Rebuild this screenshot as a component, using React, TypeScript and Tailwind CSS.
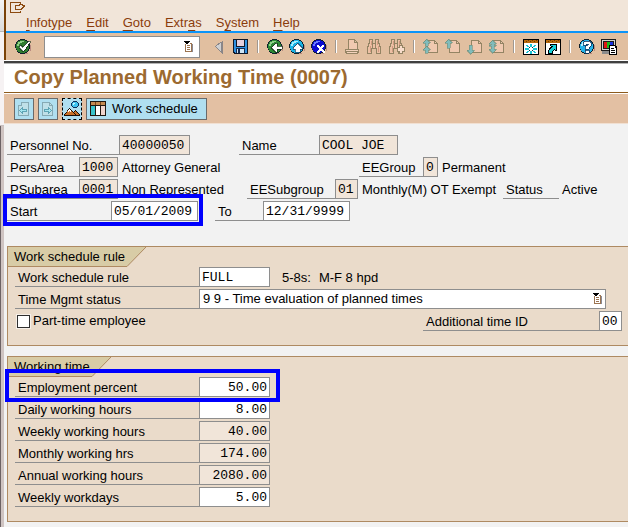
import type { ReactNode } from 'react';

const SANS = "font-['Liberation_Sans',Arial,sans-serif]";
const MONO = "font-['Liberation_Mono','Courier_New',monospace]";

function Icon({ children, className = 'size-4' }: { children: ReactNode; className?: string }) {
  return (
    <svg viewBox="0 0 16 16" className={`block shrink-0 ${className}`} shapeRendering="crispEdges" fill="none" aria-hidden="true">
      {children}
    </svg>
  );
}

/* ---------- Icons ---------- */

function Ball({ color, light }: { color: string; light: string }) {
  return (
    <>
      <path d="M6 15h7v-1h2v-2h1V6h-1v8H6z" fill="#b98a80" />
      <path d="M5 0h5v1h2v1h1v1h1v2h1v5h-1v2h-1v1h-1v1h-2v1H5v-1H3v-1H2v-2H1v-2H0V5h1V3h1V2h1V1h2z" fill="#10202c" />
      <path d="M5 1h5v1h2v1h1v2h1v5h-1v2h-1v1h-2v1H5v-1H3v-1H2v-2H1V5h1V3h1V2h2z" fill={color} />
      <path d="M5 2h4v1H7v1H5v1H4v2H2V5h1V3h2z" fill={light} />
    </>
  );
}

const CheckIcon = () => (
  <Icon>
    <Ball color="#2f7d2f" light="#8fcf86" />
    <path d="M13 2h2v2h-1v1h-1v2h-1v1h-1v2h-1v1H9v1H7v-1H6v-1H5V9H4V7h1V6h1v1h1v1h1V7h1V6h1V5h1V4h1V3h1z" fill="#fff" stroke="#0c2a10" strokeWidth="0.6" />
  </Icon>
);
const BackIcon = () => (
  <Icon>
    <Ball color="#2b8a34" light="#8fd08a" />
    <path d="M4 8h1V7h1V6h1V5h1V4h2v3h5v3h-5v3H8v-1H7v-1H6v-1H5V9H4z" fill="#fff" stroke="#0c2a10" strokeWidth="0.7" />
  </Icon>
);
const ExitIcon = () => (
  <Icon>
    <Ball color="#19b4e6" light="#a5eeff" />
    <path d="M8 4h1v1h1v1h1v1h1v1h1v2h-2v3H6v-3H4V8h1V7h1V6h1V5h1z" fill="#fff" stroke="#123a60" strokeWidth="0.7" />
  </Icon>
);
const CancelIcon = () => (
  <Icon>
    <Ball color="#0c0cd0" light="#6a7cff" />
    <path d="M6 6h2v1h1v1h1V7h1V6h2v2h-1v1h-1v1h1v1h1v1h1v2h-2v-1h-1v-1H9v1H8v1H6v-2h1v-1h1V9H7V8H6z" fill="#fff" />
  </Icon>
);
const TriangleIcon = () => (
  <Icon>
    <path d="M11 2h1v13h-1v-1h-1v-1H9v-1H8v-1H7v-1H6V9H5V8H4V7h1V6h1V5h1V4h2V3h2z" fill="#8a8688" />
    <path d="M10 4v8H9v-1H8v-1H7V9H6V8H5V7h1V6h2V5h1V4z" fill="#cfd0d2" />
  </Icon>
);
const SaveIcon = () => (
  <Icon>
    <path d="M0 0h15v15H1v-1H0z" fill="#101828" />
    <path d="M1 1h2v7h9V1h2v13H2v-1H1z" fill="#2d8fe0" />
    <path d="M4 1h7v6H4z" fill="#e4cfdc" />
    <path d="M3 9h9v5H3z" fill="#142a50" />
    <path d="M4 10h7v4H4z" fill="#cfe6f6" />
    <path d="M5 10h2v4H5z" fill="#142a50" />
  </Icon>
);
const PrintIcon = () => (
  <Icon>
    <path d="M3.5 9.500V.5h6l3 3v6M9.500.5v3h3" stroke="#948464" fill="#f0c9b0" />
    <path d="M.5 10.500h13v3h-1v1h-11v-1h-1z" stroke="#948464" fill="#f3d3bd" />
    <path d="M1 12h12v1H1z" fill="#948464" />
  </Icon>
);
const Binoculars = () => (
  <>
    <path d="M2.500.5h3v4h3v-4h3v4h1v3h1v7h-4v-5h-5v5h-4v-7h1v-3h1z" stroke="#948464" fill="#edc0a4" />
    <path d="M4 2h1v4H4zM10 2h1v4h-1zM3 7h1v6H3zM11 7h1v6h-1z" fill="#cf9a80" />
    <path d="M5 5h1v4H5zM8 5h1v4H8z" fill="#948464" />
  </>
);
const FindIcon = () => (
  <Icon>
    <Binoculars />
  </Icon>
);
const FindNextIcon = () => (
  <Icon>
    <Binoculars />
    <path d="M10 6h4v2h2v5h-2v2h-4v-2H8V8h2z" fill="#948464" />
    <path d="M11 7h2v2h2v3h-2v2h-2v-2H9V9h2z" fill="#f8ddcc" />
  </Icon>
);
const Sheet = () => (
  <>
    <path d="M4.500 1.500h7l3 3v9h-10z" stroke="#948464" fill="#f0c9b0" />
    <path d="M11.500 1.500v3h3" stroke="#948464" />
  </>
);
const UP = 'M3 0h1v1h1v1h1v1h1v1H5v3H2V4H0V3h1V2h1V1h1z';
const FirstPageIcon = () => (
  <Icon>
    <Sheet />
    <path d={UP} fill="#80bcbc" stroke="#6f8f7c" strokeWidth="0.6" />
    <path d={UP} transform="translate(0 7)" fill="#80bcbc" stroke="#6f8f7c" strokeWidth="0.6" />
  </Icon>
);
const PrevPageIcon = () => (
  <Icon>
    <Sheet />
    <path d="M3 0h1v1h1v1h1v1h1v1H5v5H2V4H0V3h1V2h1V1h1z" fill="#80bcbc" stroke="#6f8f7c" strokeWidth="0.6" />
  </Icon>
);
const NextPageIcon = () => (
  <Icon>
    <Sheet />
    <path d="M3 15h1v-1h1v-1h1v-1h1v-1H5V6H2v5H0v1h1v1h1v1h1z" fill="#80bcbc" stroke="#6f8f7c" strokeWidth="0.6" />
  </Icon>
);
const LastPageIcon = () => (
  <Icon>
    <Sheet />
    <path d="M3 1h1v1h1v1h1v1h1v1H5v1h2v1H5v3h2v1H6v1H5v1H4v1H3v-1H2v-1H1v-1H0v-1h2V7H0V6h2V5H0V4h1V3h1V2h1z" fill="#80bcbc" stroke="#6f8f7c" strokeWidth="0.6" />
  </Icon>
);
const WindowFrame = () => (
  <>
    <path d="M0 0h16v16H0z" fill="#000" />
    <path d="M1 1h14v3H1z" fill="#b8690c" />
    <path d="M3 2h1v1H3zM5 1h1v1H5zM7 2h1v1H7zM9 1h1v1H9zM11 2h1v1h-1zM13 1h1v1h-1z" fill="#6e3a00" />
    <path d="M1 4h14v11H1z" fill="#fff" />
  </>
);
const NewSessionIcon = () => (
  <Icon>
    <WindowFrame />
    <path d="M7 5h2v3H7zM7 12h2v3H7zM2 9h4v2H2zM10 9h4v2h-4zM3 6h2v1h1v1H4V7H3zM11 6h2v1h-1v1h-2V7h1zM4 12h2v1H5v1H3v-1h1zM10 12h2v1h1v1h-2v-1h-1z" fill="#19c3d6" />
    <path d="M6 8h1v1H6zM9 8h1v1H9zM6 11h1v1H6zM9 11h1v1H9z" fill="#083040" />
  </Icon>
);
const ShortcutIcon = () => (
  <Icon>
    <WindowFrame />
    <path d="M5 5h7v7h-2v-1H9v1H8v3H3v-4h1V9h1V8h1V7H5z" fill="#000" />
    <path d="M6 6h5v5h-1v-1H9v1H8v1H7v2H4v-3h1v-1h1V9h1V8h1V7H6z" fill="#18d0d8" />
  </Icon>
);
const HelpIcon = () => (
  <Icon>
    <Ball color="#25b4ea" light="#b9f2ff" />
    <path d="M4 5V3h1V2h6v1h1v4h-1v1h-1v2H6V7h1V6h2V5H7v1H4zM6 11h4v3H6z" fill="#fff" stroke="#0c3a64" strokeWidth="0.8" />
  </Icon>
);
const LayoutIcon = () => (
  <Icon>
    <path d="M0 0h15v12H0z" fill="#1c1c1c" />
    <path d="M1 1h13v10H1z" fill="#d6d3ce" />
    <path d="M2 2h11v8H2z" fill="#1c1c1c" />
    <path d="M3 3h3v6H3z" fill="#e01414" />
    <path d="M6 3h3v6H6z" fill="#18b818" />
    <path d="M9 3h3v6H9z" fill="#1830e0" />
    <path d="M1 12h9v3H1z" fill="#8c8c8c" />
    <path d="M8 6h6v1h2v9H8z" fill="#000" />
    <path d="M9 7h5v2h1v6H9z" fill="#fff" />
    <path d="M10 9h3v1h-3zM10 11h4v1h-4zM10 13h4v1h-4z" fill="#000" />
  </Icon>
);
const ListIcon = () => (
  <svg viewBox="0 0 9 11" className="block h-[11px] w-[9px]" shapeRendering="crispEdges" aria-hidden="true">
    <path d="M1 2h7v8H1z" fill="#fff" />
    <path d="M1 3h1v7h6v1H1zM6 2h2v9H7V3H6zM3 4h3v1H3zM3 6h3v1H3zM3 8h3v1H3z" fill="#9c7450" />
    <path d="M8 3h1v8H8z" fill="#8a8a94" />
    <path d="M0 0h6v1H5v1H4v1H2V2H1V1H0z" fill="#000" />
  </svg>
);
const PrevRecordIcon = () => (
  <Icon>
    <path d="M5.500 1.500h7v13h-10v-10h3z" stroke="#86aab4" fill="#bfe0e8" />
    <path d="M5.500 1.500v3h-3" stroke="#86aab4" />
    <path d="M3.500 9.500l3-3v2h4v2h-4v2z" stroke="#5ea4b4" fill="#a4e6f0" />
  </Icon>
);
const NextRecordIcon = () => (
  <Icon>
    <path d="M2.500 1.500h7l3 3v10h-10z" stroke="#86aab4" fill="#bfe0e8" />
    <path d="M9.500 1.500v3h3" stroke="#86aab4" />
    <path d="M11.500 9.500l-3-3v2h-4v2h4v2z" stroke="#5ea4b4" fill="#a4e6f0" />
  </Icon>
);
const OverviewIcon = () => (
  <Icon>
    <path d="M9 0h4v1h1v1h1v3h-1v1h-1v1H9V6H8V5H7V2h1V1h1z" fill="#10305a" />
    <path d="M9 1h4v1h1v3h-1v1H9V5H8V2h1z" fill="#3fc4f0" />
    <path d="M9 2h2v1h-1v1H9z" fill="#c8f6ff" />
    <path d="M5 7h1v1h1v1h1v1h1v1h1v-1h1V9h1v1h1v1h1v1h1v1h1v2H0v-2h1v-1h1v-1h1V9h1V8h1z" fill="#1c1008" />
    <path d="M5 8h1v1h1v1h1v1h1v1h1v1h1v1H1v-1h1v-1h1v-2h1V9h1zM11 10h1v1h1v1h1v1h1v1h-3v-1h-1v-1h-1v-1h1z" fill="#c87028" />
    <path d="M5 8h1v1h1v2H6v-1H5v1H4V9h1z" fill="#fff" />
  </Icon>
);
const ScheduleIcon = () => (
  <svg viewBox="0 0 16 15" className="block h-[15px] w-4 shrink-0" shapeRendering="crispEdges" aria-hidden="true">
    <path d="M0 0h16v15H0z" fill="#201810" />
    <path d="M1 1h14v3H1z" fill="#c48a50" />
    <path d="M1 5h4v9H1z" fill="#38c4cc" />
    <path d="M6 5h4v9H6z" fill="#fff" />
    <path d="M11 5h4v9h-4z" fill="#f0d4cc" />
    <path d="M5 1h1v3H5zM10 1h1v3h-1z" fill="#7c4818" />
  </svg>
);
const SystemMenuIcon = () => (
  <svg viewBox="0 0 15 11" className="block h-[11px] w-[15px]" shapeRendering="crispEdges" fill="none" aria-hidden="true">
    <path d="M10.500 2v-1.500h-10v10h10v-2" stroke="#8c4a10" />
    <path d="M5.500 3.500h4v-1h3v1h2v1h-1v1h-1v1h-1v1h-6z" stroke="#8c4a10" />
  </svg>
);

/* ---------- Building blocks ---------- */

function ToolButton({ label, disabled, children }: { label: string; disabled?: boolean; children: ReactNode }) {
  return (
    <button type="button" aria-label={label} title={label} disabled={disabled} className="size-4 shrink-0">
      {children}
    </button>
  );
}

const Separator = () => <span className="mx-0.5 h-[13px] w-0.5 shrink-0 border-l border-[#a09890] bg-white" />;

function FieldLabel({ id, width, children }: { id?: string; width: string; children: ReactNode }) {
  return (
    <label htmlFor={id} className={`h-5 shrink-0 truncate border-b border-[#8e8e8e] pl-[3px] pt-0.5 leading-[17px] ${width}`}>
      {children}
    </label>
  );
}

function Field({ id, value, width, locked, right }: { id: string; value: string; width: string; locked?: boolean; right?: boolean }) {
  return (
    <input
      id={id}
      defaultValue={value}
      readOnly={locked}
      className={`h-5 shrink-0 rounded-none border border-[#8e8e8e] px-0.5 text-[13px] leading-[18px] outline-none ${MONO} ${width} ${locked ? 'bg-[#f1e5d9]' : 'bg-white'} ${right ? 'text-right' : ''}`}
    />
  );
}

const Note = ({ children }: { children: ReactNode }) => <span className="h-5 shrink-0 whitespace-nowrap pt-0.5 leading-[17px]">{children}</span>;

function GroupBox({ title, width, children }: { title: string; width: number; children: ReactNode }) {
  return (
    <section className="border-y border-l border-[#ae8a62] bg-[#eadbca]">
      <h2 className="relative h-5 pl-1.5 leading-5">
        <svg width={width} height="21" viewBox={`0 0 ${width} 21`} className="absolute left-0 top-0" aria-hidden="true">
          <path d={`M0 0H${width}L${width - 19} 19.500H0z`} fill="#d8cca6" />
          <path d={`M${width} 0L${width - 19} 19.500H0`} fill="none" stroke="#ae8a62" />
        </svg>
        <span className="relative">{title}</span>
      </h2>
      {children}
    </section>
  );
}

const MENUS: [string, string, string][] = [
  ['', 'I', 'nfotype'],
  ['', 'E', 'dit'],
  ['', 'G', 'oto'],
  ['Extr', 'a', 's'],
  ['S', 'y', 'stem'],
  ['', 'H', 'elp'],
];

const HOURS = [
  { id: 'daily', label: 'Daily working hours', value: '8.00', locked: false },
  { id: 'weekly', label: 'Weekly working hours', value: '40.00', locked: true },
  { id: 'monthly', label: 'Monthly working hrs', value: '174.00', locked: true },
  { id: 'annual', label: 'Annual working hours', value: '2080.00', locked: true },
  { id: 'workdays', label: 'Weekly workdays', value: '5.00', locked: false },
];

export default function App() {
  return (
    <div className={`flex min-h-screen overflow-hidden bg-[#f2f2f2] text-[13px] text-black ${SANS}`}>
      <div className="flex w-1 shrink-0 flex-col bg-[#cfc4c2]">
        <div className="h-8 border-b border-[#b8b8b8] bg-linear-to-b from-[#f4f4f4] to-[#dcdcdc]" />
        <div className="h-[94px] border-b border-[#c8c0c0] bg-[#f6f2f3]" />
        <div className="flex-1 border-l border-[#6c6264]" />
      </div>

      <div className="min-w-0 flex-1">
        <header className="border-l-2 border-[#7a4208]">
          <div className="h-[31px] bg-[#f1e5d9] pl-1">
            <button type="button" aria-label="System menu" className="block h-[13px] pt-px">
              <SystemMenuIcon />
            </button>
            <nav className="flex gap-3.5 pl-4 leading-5 text-[#8a3c0c]">
              {MENUS.map(([before, key, after]) => (
                <button type="button" key={before + key + after}>
                  {before}
                  <u className="underline-offset-[3px]">{key}</u>
                  {after}
                </button>
              ))}
            </nav>
          </div>
          <div className="flex h-[29px] items-center gap-1.5 border-t-2 border-[#0c94f8] bg-[#e1bfa0] pl-[9px]">
            <ToolButton label="Enter"><CheckIcon /></ToolButton>
            <div className="ml-[7px] mr-[5px] flex h-[22px] w-[156px] shrink-0 items-center border border-[#8e8e8e] bg-white pr-1.5">
              <input aria-label="Command" className="min-w-0 flex-1 px-1 outline-none" />
              <button type="button" aria-label="Command history"><ListIcon /></button>
            </div>
            <ToolButton label="Close command field"><TriangleIcon /></ToolButton>
            <ToolButton label="Save"><SaveIcon /></ToolButton>
            <Separator />
            <ToolButton label="Back"><BackIcon /></ToolButton>
            <ToolButton label="Exit"><ExitIcon /></ToolButton>
            <ToolButton label="Cancel"><CancelIcon /></ToolButton>
            <Separator />
            <ToolButton label="Print" disabled><PrintIcon /></ToolButton>
            <ToolButton label="Find" disabled><FindIcon /></ToolButton>
            <ToolButton label="Find next" disabled><FindNextIcon /></ToolButton>
            <Separator />
            <ToolButton label="First page" disabled><FirstPageIcon /></ToolButton>
            <ToolButton label="Previous page" disabled><PrevPageIcon /></ToolButton>
            <ToolButton label="Next page" disabled><NextPageIcon /></ToolButton>
            <ToolButton label="Last page" disabled><LastPageIcon /></ToolButton>
            <Separator />
            <ToolButton label="New session"><NewSessionIcon /></ToolButton>
            <ToolButton label="Create shortcut"><ShortcutIcon /></ToolButton>
            <Separator />
            <ToolButton label="Help"><HelpIcon /></ToolButton>
            <ToolButton label="Customize layout"><LayoutIcon /></ToolButton>
          </div>
        </header>

        <div className="h-1 border-y border-t-white border-b-[#b4b4b4] bg-[#404040]" />
        <h1 className="h-[29px] whitespace-nowrap border-b border-[#8c5a1c] bg-white pl-2.5 text-xl font-bold leading-[27px] text-[#9c6a30]">
          Copy Planned Working Time (0007)
        </h1>
        <div className="flex h-[31px] items-center gap-1 border-y border-t-white border-b-[#f1e0d2] bg-[#e3c0a3] pl-2.5">
          <button type="button" aria-label="Previous record" disabled className="flex h-[22px] w-5 items-center justify-center border border-[#6a6a6a] bg-[#b0dff0]">
            <PrevRecordIcon />
          </button>
          <button type="button" aria-label="Next record" disabled className="flex h-[22px] w-5 items-center justify-center border border-[#6a6a6a] bg-[#b0dff0]">
            <NextRecordIcon />
          </button>
          <button type="button" aria-label="Overview" className="flex h-[22px] w-5 items-center justify-center border border-dashed border-black bg-[#b0dff0]">
            <OverviewIcon />
          </button>
          <button type="button" className="flex h-[22px] items-center gap-1.5 border border-[#6a6a6a] bg-[#b0dff0] pl-[3px] pr-2">
            <ScheduleIcon />
            <span className="leading-5">Work schedule</span>
          </button>
        </div>

        <main className="pb-1 pl-[3px] pt-[11px]">
          <div className="flex flex-col gap-0.5">
            <div className="flex">
              <FieldLabel id="pernr" width="w-28">Personnel No.</FieldLabel>
              <Field id="pernr" value="40000050" width="w-[71px]" locked />
              <div className="ml-[49px] flex">
                <FieldLabel id="name" width="w-20">Name</FieldLabel>
                <Field id="name" value="COOL JOE" width="w-[79px]" locked />
              </div>
            </div>
            <div className="flex">
              <div className="flex w-[352px] shrink-0">
                <FieldLabel id="area" width="w-[72px]">PersArea</FieldLabel>
                <div className="mr-1 flex"><Field id="area" value="1000" width="w-[39px]" locked /></div>
                <Note>Attorney General</Note>
              </div>
              <FieldLabel id="eegroup" width="w-16">EEGroup</FieldLabel>
              <div className="mr-1 flex"><Field id="eegroup" value="0" width="w-[15px]" locked /></div>
              <Note>Permanent</Note>
            </div>
            <div className="flex">
              <div className="flex w-60 shrink-0">
                <FieldLabel id="subarea" width="w-[72px]">PSubarea</FieldLabel>
                <div className="mr-1 flex"><Field id="subarea" value="0001" width="w-[39px]" locked /></div>
                <Note>Non Represented</Note>
              </div>
              <FieldLabel id="subgroup" width="w-[88px]">EESubgroup</FieldLabel>
              <Field id="subgroup" value="01" width="w-[23px]" locked />
              <div className="ml-1 flex w-[141px] shrink-0"><Note>Monthly(M) OT Exempt</Note></div>
              <span className="mr-[3px] h-5 w-14 shrink-0 border-b border-[#8e8e8e] pl-[3px] pt-0.5 leading-[17px]">Status</span>
              <Note>Active</Note>
            </div>
            <div className="flex">
              <div className="relative flex">
                <FieldLabel id="start" width="w-[104px]">Start</FieldLabel>
                <Field id="start" value="05/01/2009" width="w-[87px]" />
                <div className="pointer-events-none absolute -bottom-[5px] -left-1 -right-[5px] -top-[7px] z-10 border-4 border-[#0000fe]" />
              </div>
              <div className="ml-[17px] flex">
                <FieldLabel id="to" width="w-12">To</FieldLabel>
                <Field id="to" value="12/31/9999" width="w-[87px]" />
              </div>
            </div>
          </div>

          <div className="mt-[25px] flex flex-col gap-2.5">
            <GroupBox title="Work schedule rule" width={138}>
              <div className="flex flex-col gap-0.5 pb-3.5 pl-[7px] pr-1.5">
                <div className="flex">
                  <FieldLabel id="rule" width="w-[184px]">Work schedule rule</FieldLabel>
                  <Field id="rule" value="FULL" width="w-[71px]" />
                  <div className="ml-3 flex gap-2"><Note>5-8s:</Note><Note>M-F 8 hpd</Note></div>
                </div>
                <div className="flex pr-4">
                  <FieldLabel id="mgmt" width="w-[184px]">Time Mgmt status</FieldLabel>
                  <div className="relative min-w-0 flex-1">
                    <select id="mgmt" className="block h-5 w-full appearance-none rounded-none border border-[#8e8e8e] bg-white px-[3px] leading-[18px] outline-none">
                      <option>9 9 - Time evaluation of planned times</option>
                    </select>
                    <span className="pointer-events-none absolute right-1 top-1"><ListIcon /></span>
                  </div>
                </div>
                <div className="flex justify-between">
                  <label className="flex items-center gap-[3px] pl-0.5">
                    <input type="checkbox" className="size-[13px] appearance-none border border-[#303030] bg-white outline-1 outline-[#f6efe8]" />
                    Part-time employee
                  </label>
                  <div className="flex">
                    <FieldLabel id="addid" width="w-44">Additional time ID</FieldLabel>
                    <Field id="addid" value="00" width="w-[23px]" />
                  </div>
                </div>
              </div>
            </GroupBox>

            <GroupBox title="Working time" width={103}>
              <div className="flex flex-col items-start gap-0.5 pb-3.5 pl-[7px]">
                <div className="relative flex">
                  <FieldLabel id="percent" width="w-[184px]">Employment percent</FieldLabel>
                  <Field id="percent" value="50.00" width="w-[71px]" right />
                  <div className="pointer-events-none absolute -bottom-[5px] -left-2.5 -right-2.5 -top-2 z-10 border-4 border-[#0000fe]" />
                </div>
                {HOURS.map((h) => (
                  <div key={h.id} className="flex">
                    <FieldLabel id={h.id} width="w-[184px]">{h.label}</FieldLabel>
                    <Field id={h.id} value={h.value} width="w-[71px]" locked={h.locked} right />
                  </div>
                ))}
              </div>
            </GroupBox>
          </div>
        </main>
      </div>
    </div>
  );
}
